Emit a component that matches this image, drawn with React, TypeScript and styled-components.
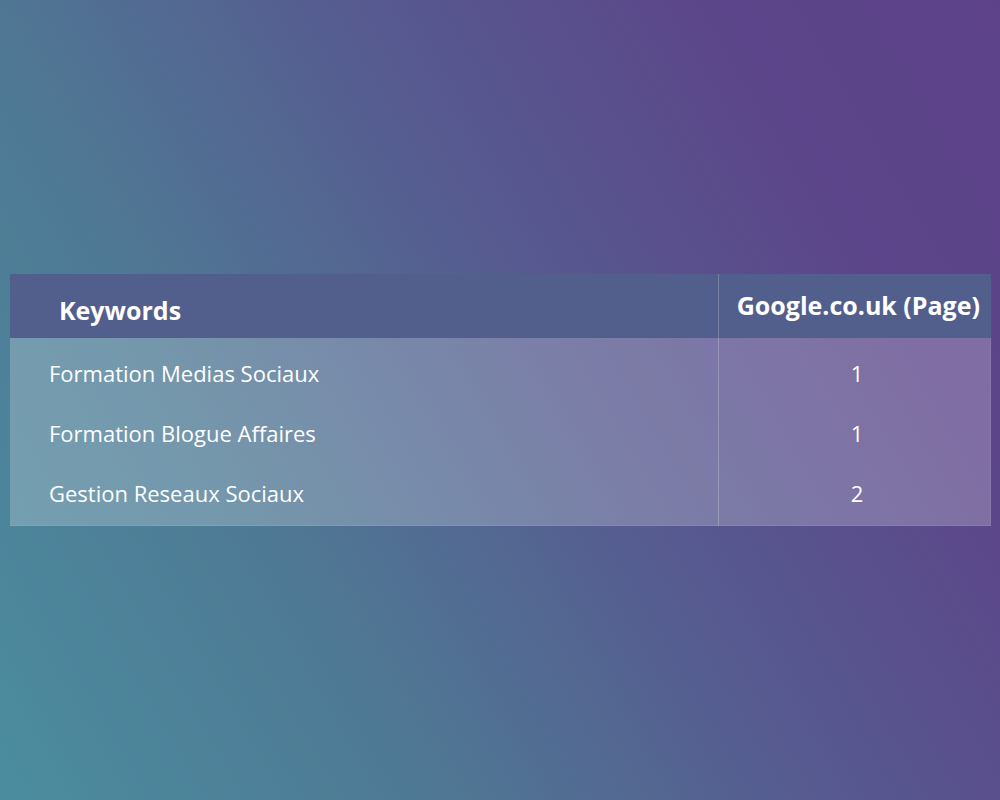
import React from "react";
import styled, { createGlobalStyle } from "styled-components";

const Global = createGlobalStyle`
  html, body { margin: 0; padding: 0; }
  body { font-family: "Open Sans", "Liberation Sans", sans-serif; }
`;

const Page = styled.div`
  width: 1000px;
  height: 800px;
  box-sizing: border-box;
  padding: 274px 9px 0 10px;
  background: linear-gradient(60deg, #4b8d9f 0%, #4f7894 30%, #565b90 55%, #5c468a 80%, #5d4289 100%);
`;

const Table = styled.div`
  display: grid;
  grid-template-columns: 708px 1fr;
  width: 981px;
`;

const HeadCell = styled.div<{ $align: "left" | "right"; $pad: string; $divider?: boolean }>`
  height: 64px;
  box-sizing: border-box;
  background: #525e8c;
  color: #ffffff;
  font-weight: 700;
  font-size: 25px;
  display: flex;
  align-items: center;
  justify-content: ${(p) => (p.$align === "left" ? "flex-start" : "flex-end")};
  padding: ${(p) => p.$pad};
  border-left: ${(p) => (p.$divider ? "1px solid rgba(255,255,255,0.22)" : "none")};
`;

const Body = styled.div`
  grid-column: 1 / span 2;
  display: grid;
  grid-template-columns: 708px 1fr;
  background: rgba(255, 255, 255, 0.22);
  padding: 5px 0 3px;
  box-shadow: inset -1px -1px 0 rgba(255, 255, 255, 0.08);
`;

const Column = styled.div<{ $divider?: boolean }>`
  border-left: ${(p) => (p.$divider ? "1px solid rgba(255,255,255,0.22)" : "none")};
  margin-top: ${(p) => (p.$divider ? "-5px" : "0")};
  padding-top: ${(p) => (p.$divider ? "5px" : "0")};
  margin-bottom: ${(p) => (p.$divider ? "-3px" : "0")};
  padding-bottom: ${(p) => (p.$divider ? "3px" : "0")};
`;

const Cell = styled.div<{ $center?: boolean }>`
  height: 60px;
  display: flex;
  align-items: center;
  justify-content: ${(p) => (p.$center ? "center" : "flex-start")};
  padding: ${(p) => (p.$center ? "0 0 0 4px" : "0 0 0 39px")};
  color: #ffffff;
  font-size: 22px;
  font-weight: 400;
`;

const rows = [
  ["Formation Medias Sociaux", "1"],
  ["Formation Blogue Affaires", "1"],
  ["Gestion Reseaux Sociaux", "2"],
];

export default function App() {
  return (
    <>
      <Global />
      <Page>
        <Table>
          <HeadCell $align="left" $pad="8px 0 0 49px">Keywords</HeadCell>
          <HeadCell $align="right" $pad="0 11px 2px 0" $divider>
            Google.co.uk (Page)
          </HeadCell>
          <Body>
            <Column>
              {rows.map((r) => (
                <Cell key={r[0]}>{r[0]}</Cell>
              ))}
            </Column>
            <Column $divider>
              {rows.map((r, i) => (
                <Cell key={i} $center>
                  {r[1]}
                </Cell>
              ))}
            </Column>
          </Body>
        </Table>
      </Page>
    </>
  );
}
